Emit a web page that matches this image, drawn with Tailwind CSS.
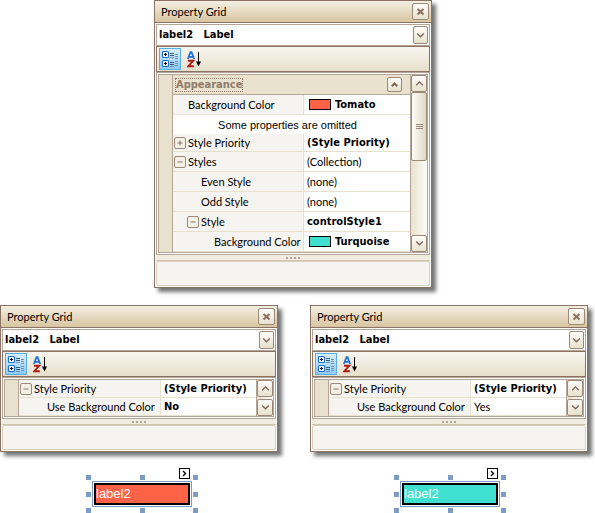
<!DOCTYPE html>
<html lang="en">
<head>
<meta charset="utf-8">
<meta name="viewport" content="width=device-width, initial-scale=1">
<title>Property Grid</title>
<script src="https://cdn.jsdelivr.net/npm/@tailwindcss/browser@4"></script>
</head>
<body class="bg-white pr-[7px] font-['Lato','Noto_Sans',sans-serif] text-[11px] leading-4 text-black">

<svg class="hidden" aria-hidden="true">
  <symbol id="close" viewBox="0 0 9 9"><path d="M1.500 2l6 5.500M7.500 2l-6 5.500" stroke="#8a7060" stroke-width="2" fill="none"/></symbol>
  <symbol id="down" viewBox="0 0 9 9"><path d="M1.200 2.500l3.300 3.300 3.300-3.300" stroke="#7d6556" stroke-width="1.300" fill="none"/></symbol>
  <symbol id="up" viewBox="0 0 9 9"><path d="M1.200 6.200l3.300-3.300 3.300 3.300" stroke="#7d6556" stroke-width="1.300" fill="none"/></symbol>
  <symbol id="collapse" viewBox="0 0 9 9"><path d="M1.800 6.200l2.700-2.700 2.700 2.700" stroke="#7d6556" stroke-width="2" fill="none"/></symbol>
  <symbol id="minus" viewBox="0 0 12 12"><rect x=".5" y=".5" width="11" height="11" rx="1.500" fill="#f3f0e6" stroke="#9c8878"/><path d="M3.500 6h5" stroke="#8a7060"/></symbol>
  <symbol id="plus" viewBox="0 0 12 12"><rect x=".5" y=".5" width="11" height="11" rx="1.500" fill="#f3f0e6" stroke="#9c8878"/><path d="M3.500 6h5M6 3.500v5" stroke="#8a7060"/></symbol>
  <symbol id="categorized" viewBox="0 0 18 18">
    <g fill="#fff" stroke="#1c6fd0" stroke-width="1.200"><rect x="1.500" y="1.500" width="6" height="6" rx="1"/><rect x="1.500" y="10.500" width="6" height="6" rx="1"/></g>
    <path d="M3 4.500h3M4.500 3v3M3 13.500h3M4.500 12v3" stroke="#000"/>
    <path d="M9 3.500h4M9 5.500h4M9 12.500h4M9 14.500h4" stroke="#3d5878"/>
    <path d="M14 4.500h3M14 6.500h3M9 7.500h4M14 8.500h3M14 11.500h3M14 13.500h3M14 15.500h3M9 16.500h4" stroke="#7590ae"/>
  </symbol>
  <symbol id="alphabetical" viewBox="0 0 15 17">
    <path d="M.8 8L3.500 1.200h1L7.200 8M2 5.800h4" stroke="#1a70d8" stroke-width="1.700" fill="none"/>
    <path d="M1 9.800h5.200L1.300 15.200H6.800" stroke="#b01818" stroke-width="1.900" fill="none"/>
    <path d="M11.500 1v12" stroke="#000"/><path d="M9 10.500h5L11.500 15.500z"/>
  </symbol>
</svg>

<main id="page"></main>

<script>
const icon = (id, size = 'size-[9px]') => `<svg class="${size} block shrink-0" aria-hidden="true"><use href="#${id}"/></svg>`;
const buttonSkin = 'flex items-center justify-center rounded-[2px] border border-[#9c8878] bg-linear-to-b from-[#fdfcf9] to-[#e8e1cd]';
const bold = "font-['DejaVu_Sans_Condensed','Noto_Sans',sans-serif] font-bold";
const indents = ['pl-[15px]', 'pl-[28px]', 'pl-[41px]'];

function row({ name, value, strong, swatch, level = 0, toggle, short, note }) {
  if (note) return `<tr class="h-[19px] bg-white"><td colspan="2" class="pr-2 text-center font-['Liberation_Sans',sans-serif]">${note}</td></tr>`;
  const box = toggle
    ? `<button aria-label="Toggle ${name}" class="absolute ${short ? 'top-[3px]' : 'top-1'} ${level ? 'left-[14px]' : 'left-px'}">${icon(toggle, 'size-3')}</button>` : '';
  const chip = swatch ? `<span class="mr-1 ml-[2px] h-[11px] w-[22px] border border-black ${swatch}"></span>` : '';
  return `<tr class="${short ? 'h-[18px]' : 'h-[20px]'}">
    <th scope="row" class="relative border-r border-b border-[#e8e1cd] bg-[#f6f4f0] text-left font-normal whitespace-nowrap ${indents[level]}">${box}${name}</th>
    <td class="border-b border-[#e8e1cd] bg-white pl-[3px] whitespace-nowrap ${strong ? bold : ''}"><div class="flex items-center">${chip}${value}</div></td>
  </tr>`;
}

function panel({ id, rows, nameWidth, category, thumb, width = 'w-full' }) {
  const header = category ? `<div class="flex h-[20px] items-center justify-between border-b border-[#b5a597] bg-[#e9e2cf] pr-2 pl-[2px]">
      <h2 class="${bold} border border-dotted border-[#8f7b6c] leading-3 text-[#8f7b6c]">${category}</h2>
      <button aria-label="Collapse ${category}" class="${buttonSkin} size-[15px]">${icon('collapse')}</button></div>` : '';
  return `<section class="${width} border border-[#8a7365] bg-white shadow-[4px_4px_4px_rgba(0,0,0,0.55)]">
    <header class="flex h-[22px] items-center justify-between border-b border-[#8a7365] bg-linear-to-b from-[#f4efe3] to-[#d8c5a1] pr-[2px] pl-[6px]">
      <h1>Property Grid</h1>
      <button aria-label="Close" class="${buttonSkin} size-[17px]">${icon('close')}</button>
    </header>
    <div class="p-px">
      <div class="relative h-[22px] border border-[#b5a597]">
        <select id="${id}" aria-label="Component" class="${bold} block h-full w-full appearance-none bg-white pl-[2px] leading-4"><option>label2&nbsp;&nbsp; Label</option></select>
        <span class="${buttonSkin} pointer-events-none absolute top-px right-px h-[18px] w-[15px]">${icon('down')}</span>
      </div>
      <div role="toolbar" class="flex h-[26px] items-center gap-[6px] border border-[#8a7365] bg-linear-to-b from-[#f8f6f0] to-[#e6dfca] pl-[2px]">
        <button aria-label="Categorized" class="flex size-[22px] items-center justify-center border border-[#5aaeea] bg-linear-to-b from-[#d8edfc] to-[#8ccbf5]">${icon('categorized', 'size-[18px]')}</button>
        <button aria-label="Alphabetical">${icon('alphabetical', 'h-[17px] w-[15px]')}</button>
      </div>
      <div class="border border-[#b5a597] p-px">
        <div class="flex border border-[#b5a597]">
          <div class="box-content w-[13px] shrink-0 border-r border-[#b5a597] bg-[#e8e1cd]"></div>
          <div class="min-w-0 flex-1">${header}
            <table class="w-full table-fixed border-separate border-spacing-0"><colgroup><col class="${nameWidth}"><col></colgroup><tbody>${rows.map(row).join('')}</tbody></table>
          </div>
          <div role="group" aria-label="Scroll" class="flex w-[17px] shrink-0 flex-col justify-between border-l border-[#b5a597] bg-linear-to-r from-[#e8e1cd] to-[#fdfcf9]">
            <button aria-label="Scroll up" class="${buttonSkin} h-[17px] w-full">${icon('up')}</button>
            ${thumb ? `<div class="flex h-[69px] flex-col items-center justify-center gap-px rounded-[2px] border border-[#9c8878] bg-linear-to-r from-[#fdfcf9] to-[#e0d8c2]">
              <span class="h-px w-[7px] bg-[#9c8878]"></span><span class="h-px w-[7px] bg-[#9c8878]"></span><span class="h-px w-[7px] bg-[#9c8878]"></span></div><div class="flex-1"></div>` : ''}
            <button aria-label="Scroll down" class="${buttonSkin} h-[17px] w-full">${icon('down')}</button>
          </div>
        </div>
      </div>
      <div class="flex h-[6px] items-center justify-center gap-[2px] border-b border-[#cfc4ae] bg-[#f0ecdf]">
        ${'<span class="size-[2px] bg-[#b5a597]"></span>'.repeat(4)}
      </div>
      <div class="h-[25px] rounded-[2px] border border-[#d9d0bc] bg-[#f6f4f0]"></div>
    </div>
  </section>`;
}

function designer(text, fill, shift) {
  const handles = ['-top-[7px] -left-[7px]', '-top-[7px] left-[47px]', '-top-[7px] -right-[7px]', 'top-[10px] -left-[7px]', 'top-[10px] -right-[7px]', 'top-[26px] -left-[7px]', 'top-[26px] left-[47px]', 'top-[26px] -right-[7px]'];
  return `<div class="flex justify-center pb-[6px] ${shift}"><div class="relative h-[26px] w-[100px] border border-[#7d9cc4] p-px">
    <div class="h-full border-2 border-black font-['Liberation_Sans',sans-serif] text-[13px] leading-[18px] text-white ${fill}">${text}</div>
    ${handles.map(h => `<span class="absolute size-[5px] bg-[#7d9cc4] ${h}"></span>`).join('')}
    <button aria-label="Tasks for ${text}" class="absolute -top-[14px] right-px flex size-[11px] items-center justify-center border border-black bg-white"><svg class="size-[7px]" viewBox="0 0 7 7"><path d="M2 1l2.500 2.500L2 6" fill="none" stroke="#000" stroke-width="1.400"/></svg></button>
  </div></div>`;
}

const priority = { name: 'Style Priority', value: '(Style Priority)', strong: true, short: true };
const mainRows = [
  { name: 'Background Color', value: 'Tomato', strong: true, swatch: 'bg-[#ff6347]' },
  { note: 'Some properties are omitted' },
  { ...priority, toggle: 'plus' },
  { name: 'Styles', value: '(Collection)', toggle: 'minus' },
  { name: 'Even Style', value: '(none)', level: 1 },
  { name: 'Odd Style', value: '(none)', level: 1 },
  { name: 'Style', value: 'controlStyle1', strong: true, level: 1, toggle: 'minus' },
  { name: 'Background Color', value: 'Turquoise', strong: true, level: 2, swatch: 'bg-[#40e0d0]' },
];
const useColor = (value, strong) => [{ ...priority, toggle: 'minus' }, { name: 'Use Background Color', value, strong, level: 1, short: true }];

document.getElementById('page').innerHTML = `
  <div class="flex justify-center pr-[2px]">${panel({ id: 'all', rows: mainRows, nameWidth: 'w-[131px]', category: 'Appearance', thumb: true, width: 'w-[278px]' })}</div>
  <div class="mt-[17px] grid grid-cols-2 gap-x-8 gap-y-[29px]">
    ${panel({ id: 'off', rows: useColor('No', true), nameWidth: 'w-[142px]' })}
    ${panel({ id: 'on', rows: useColor('Yes', false), nameWidth: 'w-[142px]' })}
    ${designer('label2', 'bg-[#ff6347]', 'pl-[6px]')}
    ${designer('label2', 'bg-[#40e0d0]', 'pl-[2px]')}
  </div>`;
</script>
</body>
</html>
